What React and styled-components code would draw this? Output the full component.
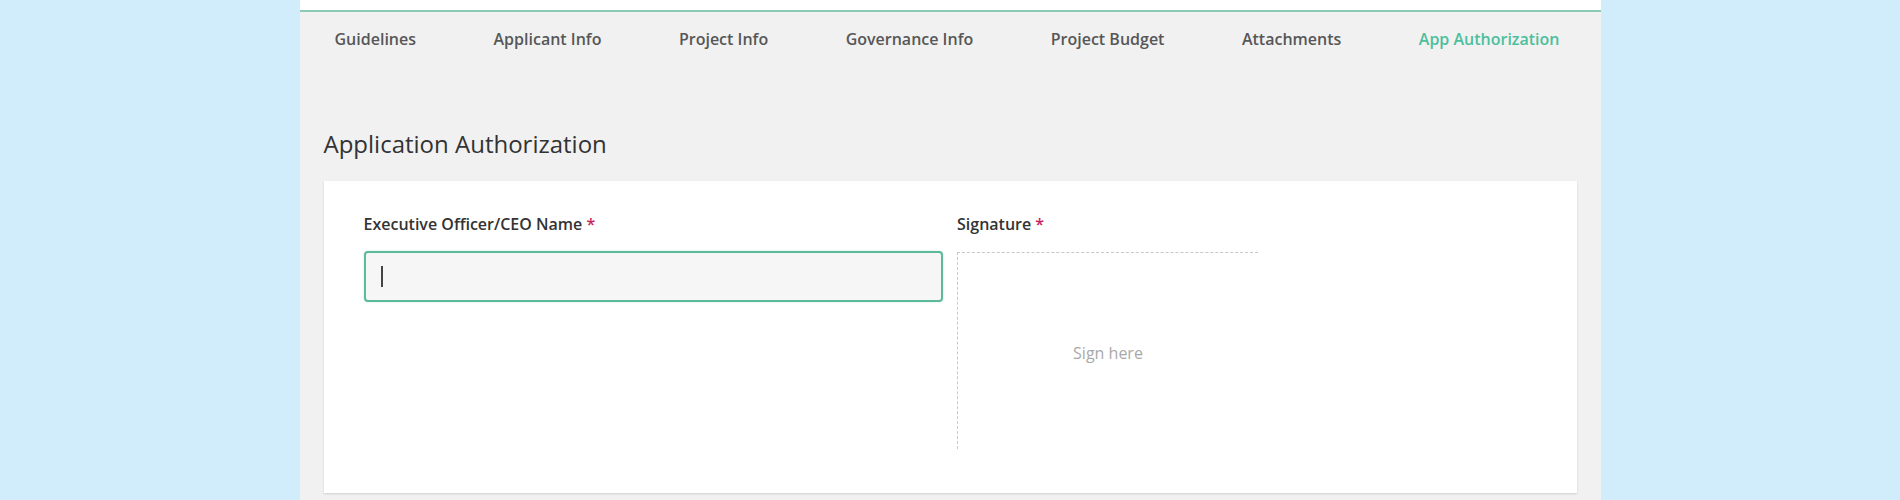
import React from 'react';
import styled, { createGlobalStyle } from 'styled-components';

const GlobalStyle = createGlobalStyle`
  html, body {
    margin: 0;
    padding: 0;
    background-color: #d1ecfb;
    font-family: "Open Sans", "Liberation Sans", sans-serif;
  }
`;

const Page = styled.div`
  display: flex;
  justify-content: center;
  min-height: 500px;
`;

const Panel = styled.div`
  width: 1301px;
  background-color: #f1f1f2;
  padding-bottom: 6px;
`;

const TopStrip = styled.div`
  height: 10px;
  background-color: #fff;
  border-bottom: 2px solid #8ccab5;
`;

const Nav = styled.nav`
  display: flex;
  gap: 77.5px;
  padding: 17px 0 0 35px;
`;

const Tab = styled.div`
  font-size: 16px;
  line-height: 20px;
  font-weight: 600;
  color: ${(p) => (p.active ? '#4dbf9c' : '#575757')};
  white-space: nowrap;
  cursor: pointer;
`;

const Content = styled.div`
  padding: 0 24px;
`;

const Heading = styled.h2`
  margin: 79px 0 0 0;
  font-size: 24px;
  line-height: 32px;
  font-weight: 400;
  color: #333;
`;

const Card = styled.div`
  margin-top: 21px;
  background-color: #fff;
  box-shadow: 0 1px 2px rgba(0, 0, 0, 0.14);
  padding: 32px 40px 44px 40px;
  display: grid;
  grid-template-columns: 1fr 1fr;
  column-gap: 14px;
`;

const Field = styled.div`
  display: flex;
  flex-direction: column;
`;

const Label = styled.label`
  font-size: 16px;
  line-height: 22px;
  font-weight: 600;
  color: #333;
  margin-bottom: ${(p) => p.gap}px;
`;

const Required = styled.span`
  color: #c8245a;
`;

const Input = styled.div`
  box-sizing: border-box;
  height: 51px;
  border: 2px solid #5db99b;
  border-radius: 4px;
  background-color: #f6f6f6;
  box-shadow: 0 0 2px rgba(93, 185, 155, 0.4);
  display: flex;
  align-items: center;
  padding-left: 15px;
`;

const Caret = styled.span`
  width: 2px;
  height: 21px;
  background-color: #444;
`;

const SignBox = styled.div`
  box-sizing: border-box;
  width: 301px;
  height: 197px;
  border-top: 1px dashed #c8c8c8;
  border-left: 1px dashed #c8c8c8;
  display: flex;
  align-items: center;
  justify-content: center;
  padding-top: 3px;
  font-size: 16px;
  color: #a9a9a9;
`;

const tabs = [
  'Guidelines',
  'Applicant Info',
  'Project Info',
  'Governance Info',
  'Project Budget',
  'Attachments',
  'App Authorization',
];

const App = () => {
  return (
    <>
      <GlobalStyle />
      <Page>
        <Panel>
          <TopStrip />
          <Nav>
            {tabs.map((t) => (
              <Tab key={t} active={t === 'App Authorization'}>
                {t}
              </Tab>
            ))}
          </Nav>
          <Content>
            <Heading>Application Authorization</Heading>
            <Card>
              <Field>
                <Label gap={16}>
                  Executive Officer/CEO Name <Required>*</Required>
                </Label>
                <Input>
                  <Caret />
                </Input>
              </Field>
              <Field>
                <Label gap={17}>
                  Signature <Required>*</Required>
                </Label>
                <SignBox>Sign here</SignBox>
              </Field>
            </Card>
          </Content>
        </Panel>
      </Page>
    </>
  );
};

export default App;
